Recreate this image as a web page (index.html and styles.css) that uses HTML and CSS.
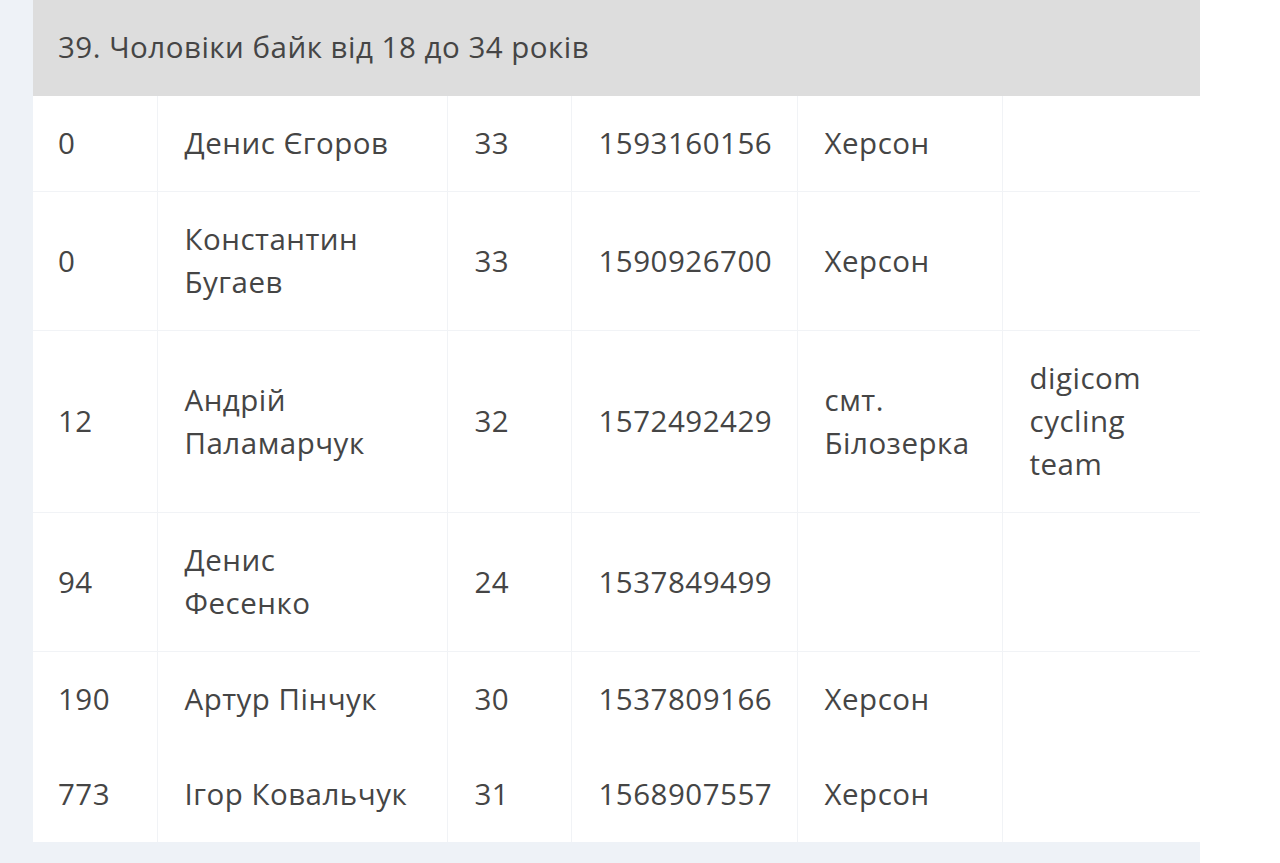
FILE: index.html
```html
<!DOCTYPE html>
<html lang="uk">
<head>
<meta charset="utf-8">
<link rel="stylesheet" href="styles.css">
</head>
<body>
<div class="page">
  <table class="results">
    <colgroup>
      <col class="c1"><col class="c2"><col class="c3"><col class="c4"><col class="c5"><col class="c6">
    </colgroup>
    <thead>
      <tr><th colspan="6">39. Чоловіки байк від 18 до 34 років</th></tr>
    </thead>
    <tbody>
      <tr><td>0</td><td>Денис Єгоров</td><td>33</td><td>1593160156</td><td>Херсон</td><td></td></tr>
      <tr><td>0</td><td>Константин Бугаев</td><td>33</td><td>1590926700</td><td>Херсон</td><td></td></tr>
      <tr><td>12</td><td>Андрій Паламарчук</td><td>32</td><td>1572492429</td><td>смт. Білозерка</td><td>digicom cycling team</td></tr>
      <tr><td>94</td><td>Денис<br>Фесенко</td><td>24</td><td>1537849499</td><td></td><td></td></tr>
      <tr class="plain"><td>190</td><td>Артур Пінчук</td><td>30</td><td>1537809166</td><td>Херсон</td><td></td></tr>
      <tr class="plain"><td>773</td><td>Ігор Ковальчук</td><td>31</td><td>1568907557</td><td>Херсон</td><td></td></tr>
    </tbody>
  </table>
</div>
</body>
</html>
```
FILE: styles.css
```css
html, body {
  margin: 0;
  padding: 0;
  background: #ffffff;
}
.page {
  width: 1200px;
  height: 863px;
  box-sizing: border-box;
  background: #eef2f7;
  padding-left: 33px;
  overflow: hidden;
}
.results {
  width: 1167px;
  border-collapse: collapse;
  table-layout: fixed;
  background: #ffffff;
  font-family: "Open Sans", "Noto Sans", sans-serif;
  font-size: 29.5px;
  letter-spacing: 0.5px;
  line-height: 43px;
  color: #454545;
}
.c1 { width: 124px; }
.c2 { width: 290px; }
.c3 { width: 124px; }
.c4 { width: 226px; }
.c5 { width: 205px; }
.c6 { width: 198px; }
.results th {
  height: 96px;
  box-sizing: border-box;
  padding: 0 25px 3px;
  background: #dddddd;
  font-weight: 400;
  text-align: left;
  vertical-align: middle;
}
.results td {
  padding: 25px 20px 27px 27px;
  vertical-align: middle;
  text-align: left;
  border-left: 1px solid #f1f3f6;
  border-bottom: 1px solid #f1f3f6;
  word-wrap: break-word;
}
.results td:first-child {
  border-left: none;
  padding-left: 25px;
}
.results tr.plain td {
  border-bottom: none;
}
```
